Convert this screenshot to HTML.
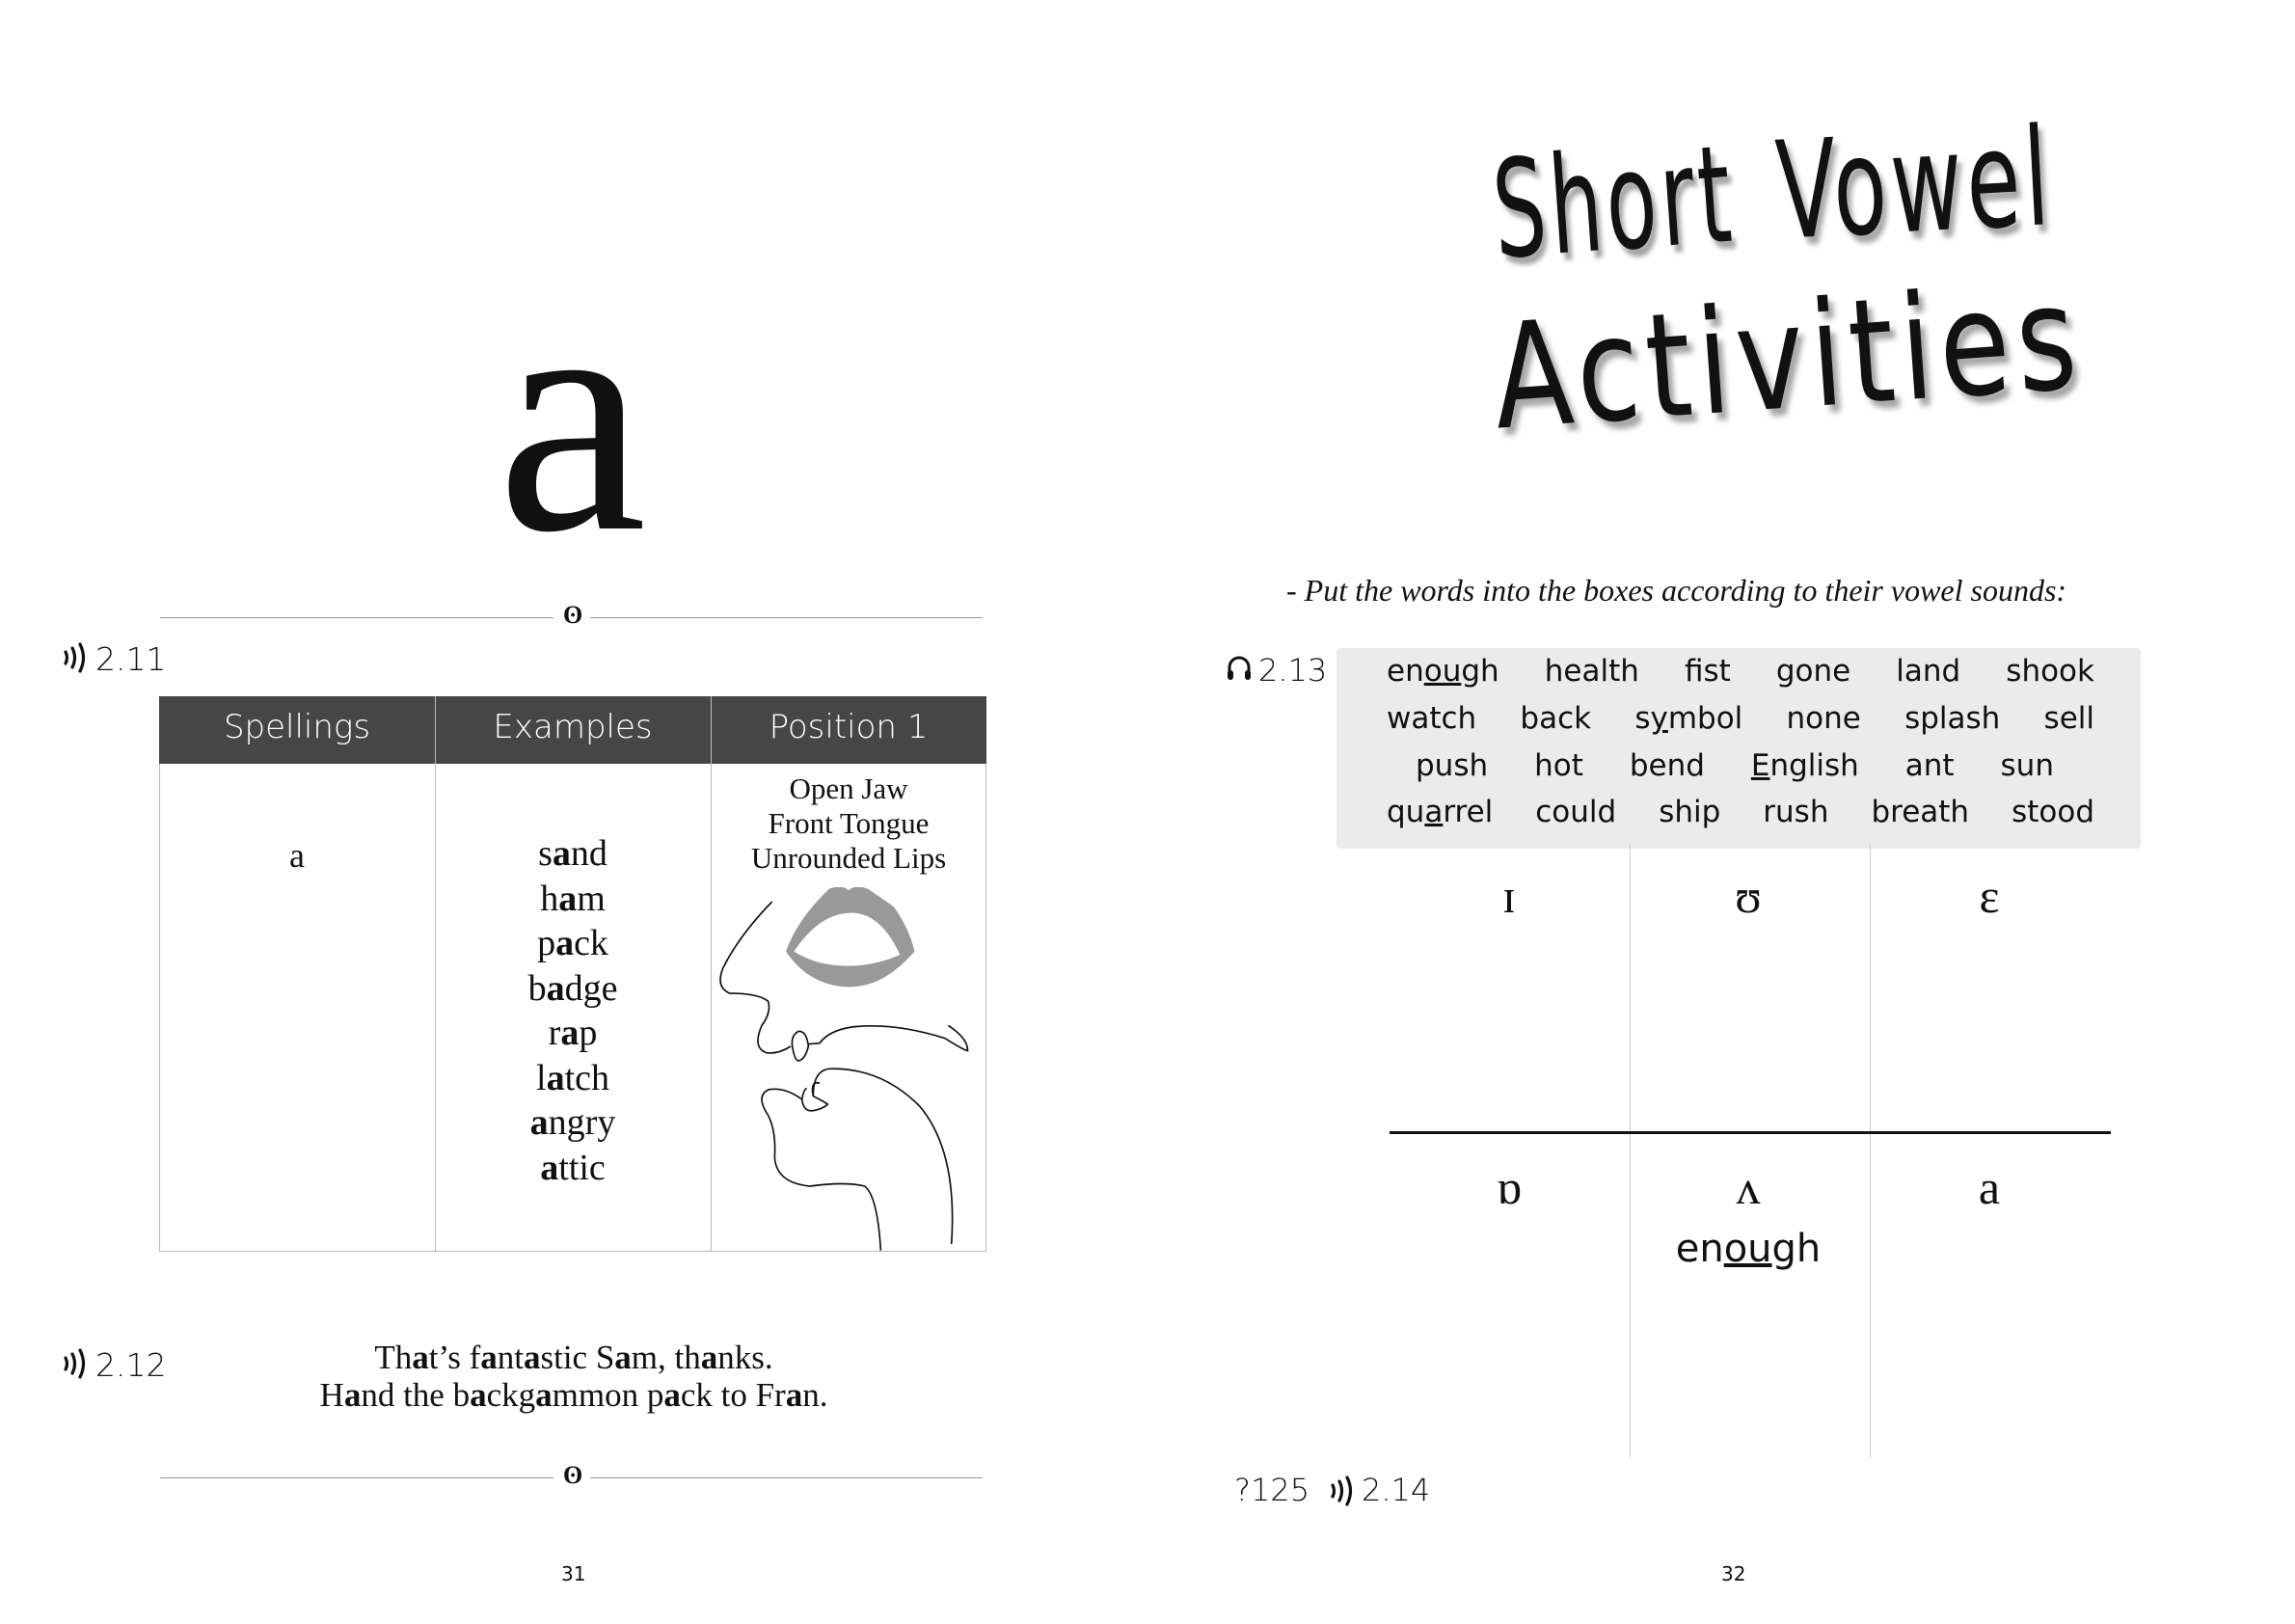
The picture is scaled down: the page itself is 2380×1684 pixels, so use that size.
<!DOCTYPE html>
<html><head><meta charset="utf-8"><style>
*{margin:0;padding:0;box-sizing:border-box}
body{width:2380px;height:1684px;background:#fff;position:relative;overflow:hidden;font-family:"Liberation Serif",serif;color:#111}
.abs{position:absolute}
.sans{font-family:"DejaVu Sans","Liberation Sans",sans-serif}
.hand{font-family:"DejaVu Sans",sans-serif;font-size:31px;color:#111}
.sep{position:absolute;height:1px;background:#999}
.row{position:absolute;display:flex;justify-content:space-between;white-space:nowrap}
.title{position:absolute;white-space:nowrap;font-family:'DejaVu Sans Condensed','DejaVu Sans',sans-serif;line-height:1;text-shadow:6px 8px 6px rgba(0,0,0,.35);font-weight:300}
b{font-weight:bold}
</style></head><body>

<!-- LEFT PAGE -->
<div class="abs" style="left:470px;top:255px;width:246px;text-align:center;font-size:350px;line-height:350px;">a</div>

<div class="sep" style="left:166px;top:640px;width:408px"></div>
<div class="sep" style="left:612px;top:640px;width:407px"></div>
<div class="abs" style="left:584px;top:623px;font-size:26px;font-weight:bold;">ʘ</div>

<svg class="abs" style="left:64px;top:666px" width="28" height="32" viewBox="0 0 28 32"><path d="M4 10q3 6 0 12M11 6q5 10 0 20M19 2q7 14 0 28" stroke="#111" stroke-width="3.2" fill="none" stroke-linecap="round"/></svg>
<div class="abs sans" style="left:99px;top:664px;font-size:33px;font-weight:300">2.11</div>

<div class="abs" style="left:165px;top:722px;width:858px;height:576px;border:1px solid #bbb"></div>
<div class="abs" style="left:165px;top:722px;width:858px;height:70px;background:#464646"></div>
<div class="abs" style="left:451px;top:722px;width:1px;height:576px;background:#bbb"></div>
<div class="abs" style="left:737px;top:722px;width:1px;height:576px;background:#bbb"></div>
<div class="abs sans" style="left:165px;top:734px;width:286px;text-align:center;color:#fff;font-size:34px;font-weight:300">Spellings</div>
<div class="abs sans" style="left:451px;top:734px;width:286px;text-align:center;color:#fff;font-size:34px;font-weight:300">Examples</div>
<div class="abs sans" style="left:737px;top:734px;width:286px;text-align:center;color:#fff;font-size:34px;font-weight:300">Position 1</div>

<div class="abs" style="left:165px;top:866px;width:286px;text-align:center;font-size:36px">a</div>
<div class="abs" style="left:451px;top:862px;width:286px;text-align:center;font-size:38px;line-height:46.5px">s<b>a</b>nd<br>h<b>a</b>m<br>p<b>a</b>ck<br>b<b>a</b>dge<br>r<b>a</b>p<br>l<b>a</b>tch<br><b>a</b>ngry<br><b>a</b>ttic</div>
<div class="abs" style="left:737px;top:800px;width:286px;text-align:center;font-size:31px;line-height:36px">Open Jaw<br>Front Tongue<br>Unrounded Lips</div>

<svg class="abs" style="left:740px;top:920px" width="290" height="400" viewBox="0 0 870 1200">
<path d="M360 5 Q400 -10 420 10 Q440 -10 480 5 L560 60 Q610 130 625 200 Q530 310 425 310 Q300 310 225 200 Q260 100 360 5 Z M250 200 Q330 80 430 80 Q520 80 580 210 Q500 245 420 245 Q320 245 250 200 Z" fill="#999" fill-rule="evenodd"/>
<g stroke="#111" stroke-width="5" fill="none">
<path d="M182 45 Q80 150 30 250 Q5 310 50 330 Q140 330 170 355 Q180 390 150 430 Q120 500 165 515 Q200 520 240 495"/>
<path d="M265 448 Q240 460 245 495 Q252 540 265 540 Q285 535 295 495 Q290 448 265 448 Z"/>
<path d="M295 488 L330 485 Q360 445 430 435 Q560 420 720 470 Q800 520 790 505 Q790 470 730 430"/>
<path d="M330 610 Q300 600 310 650 Q340 665 355 675 Q340 690 310 695 Q280 700 275 660 Q280 630 290 625 M310 650 Q310 570 360 565 Q520 560 640 680 Q760 820 740 1110"/>
<path d="M275 660 Q220 620 170 630 Q130 650 170 710 Q195 760 190 840 Q195 920 300 930 Q410 915 470 930 Q510 960 520 1130"/>
</g></svg>

<svg class="abs" style="left:64px;top:1398px" width="28" height="32" viewBox="0 0 28 32"><path d="M4 10q3 6 0 12M11 6q5 10 0 20M19 2q7 14 0 28" stroke="#111" stroke-width="3.2" fill="none" stroke-linecap="round"/></svg>
<div class="abs sans" style="left:99px;top:1396px;font-size:33px;font-weight:300">2.12</div>
<div class="abs" style="left:250px;top:1388px;width:690px;text-align:center;font-size:35px;line-height:39px">Th<b>a</b>t’s f<b>a</b>nt<b>a</b>stic S<b>a</b>m, th<b>a</b>nks.<br>H<b>a</b>nd the b<b>a</b>ckg<b>a</b>mmon p<b>a</b>ck to Fr<b>a</b>n.</div>

<div class="sep" style="left:166px;top:1532px;width:408px"></div>
<div class="sep" style="left:612px;top:1532px;width:407px"></div>
<div class="abs" style="left:584px;top:1515px;font-size:26px;font-weight:bold;">ʘ</div>

<div class="abs sans" style="left:582px;top:1620px;font-size:20px">31</div>
<div class="abs sans" style="left:1785px;top:1620px;font-size:20px">32</div>

<!-- RIGHT PAGE -->
<div class="title" style="left:1544px;top:150px;font-size:140px;transform:rotate(-4deg) scaleX(.68);transform-origin:left top;letter-spacing:6px">Short</div>
<div class="title" style="left:1839px;top:130px;font-size:140px;transform:rotate(-3deg) scaleX(.72);transform-origin:left top;letter-spacing:6px">Vowel</div>
<div class="title" style="left:1544px;top:318px;font-size:150px;transform:rotate(-4deg) scaleX(.88);transform-origin:left top;letter-spacing:8px">Activities</div>

<div class="abs" style="left:1334px;top:594px;font-size:32px;font-style:italic;white-space:nowrap">- Put the words into the boxes according to their vowel sounds:</div>

<svg class="abs" style="left:1272px;top:679px" width="26" height="28" viewBox="0 0 26 28"><path d="M3 22 V13 A10 10 0 0 1 23 13 V22" stroke="#111" stroke-width="3" fill="none"/><rect x="1" y="16" width="6" height="10" rx="3" fill="#111"/><rect x="19" y="16" width="6" height="10" rx="3" fill="#111"/></svg>
<div class="abs sans" style="left:1305px;top:676px;font-size:32px;font-weight:300">2.13</div>

<div class="abs" style="left:1386px;top:672px;width:834px;height:208px;background:#ebebeb;border-radius:4px"></div>
<div class="row hand" style="left:1438px;top:678px;width:734px"><span>en<u>ou</u>gh</span><span>health</span><span>fist</span><span>gone</span><span>land</span><span>shook</span></div>
<div class="row hand" style="left:1438px;top:727px;width:734px"><span>watch</span><span>back</span><span>s<u>y</u>mbol</span><span>none</span><span>splash</span><span>sell</span></div>
<div class="row hand" style="left:1468px;top:776px;width:662px"><span>push</span><span>hot</span><span>bend</span><span><u>E</u>nglish</span><span>ant</span><span>sun</span></div>
<div class="row hand" style="left:1438px;top:824px;width:734px"><span>qu<u>a</u>rrel</span><span>could</span><span>ship</span><span>rush</span><span>breath</span><span>stood</span></div>

<div class="abs" style="left:1690px;top:876px;width:1px;height:636px;background:#ccc"></div>
<div class="abs" style="left:1939px;top:876px;width:1px;height:636px;background:#ccc"></div>
<div class="abs" style="left:1441px;top:1173px;width:748px;height:3px;background:#111"></div>

<div class="abs" style="left:1485px;top:900px;width:160px;text-align:center;font-size:50px">ɪ</div>
<div class="abs" style="left:1733px;top:900px;width:160px;text-align:center;font-size:50px">ʊ</div>
<div class="abs" style="left:1983px;top:900px;width:160px;text-align:center;font-size:50px">ɛ</div>
<div class="abs" style="left:1485px;top:1202px;width:160px;text-align:center;font-size:50px">ɒ</div>
<div class="abs" style="left:1733px;top:1202px;width:160px;text-align:center;font-size:50px">ʌ</div>
<div class="abs" style="left:1983px;top:1202px;width:160px;text-align:center;font-size:50px">a</div>
<div class="abs hand" style="left:1733px;top:1272px;width:160px;text-align:center;font-size:40px">en<u>ou</u>gh</div>

<div class="abs sans" style="left:1280px;top:1526px;font-size:32px;font-weight:300">?125</div>
<svg class="abs" style="left:1378px;top:1530px" width="28" height="32" viewBox="0 0 28 32"><path d="M4 10q3 6 0 12M11 6q5 10 0 20M19 2q7 14 0 28" stroke="#111" stroke-width="3.2" fill="none" stroke-linecap="round"/></svg>
<div class="abs sans" style="left:1412px;top:1526px;font-size:32px;font-weight:300">2.14</div>

</body></html>
